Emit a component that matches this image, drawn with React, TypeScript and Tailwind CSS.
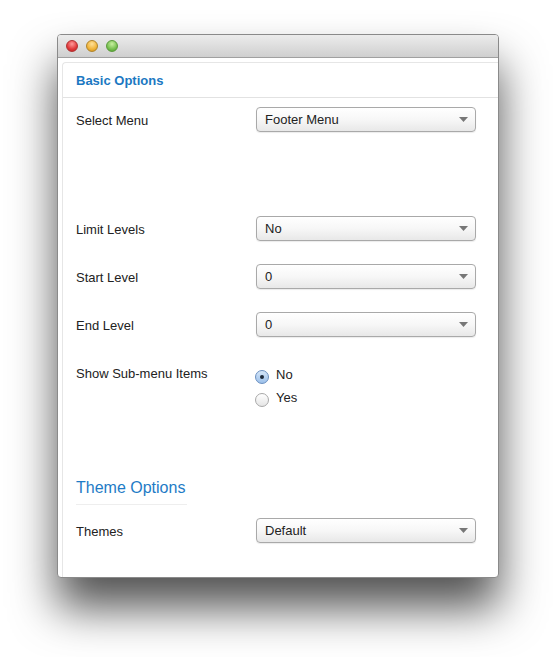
import React from "react";

const font = { fontFamily: '"Liberation Sans", Arial, Helvetica, sans-serif' };

function Select({ value }: { value: string }) {
  return (
    <div className="w-[220px] h-[25px] -mt-[1px] rounded-[4px] border border-[#a9a9a9] bg-gradient-to-b from-white via-[#f7f7f7] to-[#e8e8e8] flex items-center justify-between pl-[8px] pr-[7px] shadow-[0_1px_1px_rgba(0,0,0,0.08)]">
      <span className="text-[13px] text-[#222] mt-[1px]">{value}</span>
      <svg width="9" height="5" viewBox="0 0 9 5"><path d="M0 0 L9 0 L4.5 5 Z" fill="#777" /></svg>
    </div>
  );
}

function Row({ label, children, h = 48 }: { label: string; children: React.ReactNode; h?: number }) {
  return (
    <div className="flex items-start" style={{ height: h }}>
      <div className="w-[180px] pt-[3px] text-[13px] text-[#222]">{label}</div>
      {children}
    </div>
  );
}

function Radio({ checked, label }: { checked?: boolean; label: string }) {
  return (
    <div className="flex items-center gap-[7px] h-[23px] -ml-[1px]">
      <div className={`w-[14px] h-[14px] rounded-full border flex items-center justify-center ${checked ? "border-[#6a8fc0] bg-gradient-to-b from-[#d5e6f8] to-[#9cc0ea]" : "border-[#a8a8a8] bg-gradient-to-b from-white to-[#e5e5e5]"}`}>
        {checked && <div className="w-[4px] h-[4px] rounded-full bg-[#1d2a3a]" />}
      </div>
      <span className="text-[13px] text-[#222] -mt-[4px]">{label}</span>
    </div>
  );
}

export default function App() {
  return (
    <div className="w-[556px] h-[657px] bg-white pt-[34px] pl-[57px]" style={font}>
      <div className="w-[442px] h-[544px] rounded-[4px] border border-[#8a8a8a] bg-white shadow-[0_30px_45px_rgba(0,0,0,0.68)] overflow-hidden flex flex-col">
        <div className="h-[23px] shrink-0 bg-gradient-to-b from-[#ececec] to-[#cfcfcf] border-b border-[#a0a0a0] flex items-center gap-[8px] pl-[8px]">
          <div className="w-[12px] h-[12px] rounded-full border border-[#b03030] bg-[radial-gradient(circle_at_50%_30%,#ff9a9a,#e0383a_60%,#b82020)]" />
          <div className="w-[12px] h-[12px] rounded-full border border-[#b0842a] bg-[radial-gradient(circle_at_50%_30%,#ffe19a,#f0b43a_60%,#c88a18)]" />
          <div className="w-[12px] h-[12px] rounded-full border border-[#5a9a3a] bg-[radial-gradient(circle_at_50%_30%,#c8f0a0,#78c050_60%,#4a9a2a)]" />
        </div>
        <div className="flex-1 pt-[4px] pl-[4px]">
          <div className="h-full rounded-tl-[4px] border-l border-t border-[#e6e6e6]">
            <div className="h-[35px] border-b border-[#e2e2e2] pl-[13px] flex items-center pt-[1px]">
              <span className="text-[13px] font-bold text-[#1b78c2]">Basic Options</span>
            </div>
            <div className="pl-[13px] pr-[22px] pt-[10px]">
              <Row label="Select Menu" h={109}><Select value="Footer Menu" /></Row>
              <Row label="Limit Levels"><Select value="No" /></Row>
              <Row label="Start Level"><Select value="0" /></Row>
              <Row label="End Level"><Select value="0" /></Row>
              <Row label="Show Sub-menu Items" h={115}>
                <div className="pt-[4px]">
                  <Radio checked label="No" />
                  <Radio label="Yes" />
                </div>
              </Row>
              <div className="w-[111px] border-b border-[#eeeeee] h-[29px] whitespace-nowrap">
                <span className="text-[16px] text-[#1e7bc6]">Theme Options</span>
              </div>
              <div className="h-[14px]" />
              <Row label="Themes"><Select value="Default" /></Row>
            </div>
          </div>
        </div>
      </div>
    </div>
  );
}
